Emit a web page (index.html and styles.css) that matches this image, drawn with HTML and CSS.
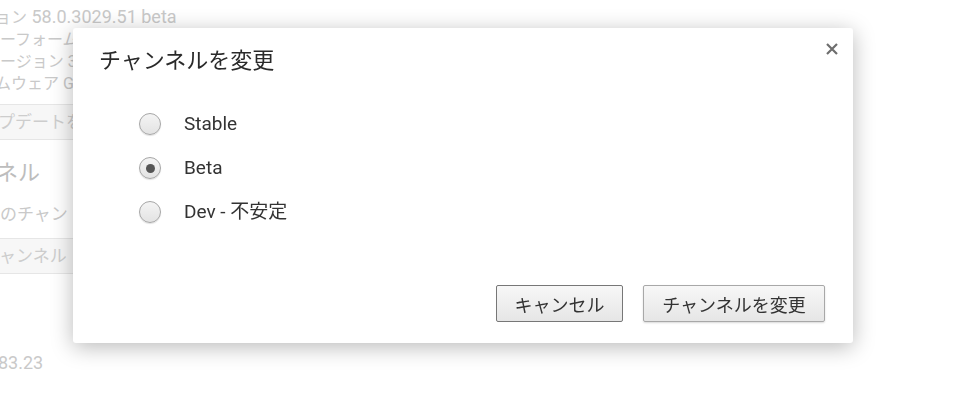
FILE: index.html
```html
<!DOCTYPE html>
<html lang="ja">
<head>
<meta charset="utf-8">
<title>チャンネルを変更</title>
<link rel="stylesheet" href="styles.css">
</head>
<body>
<div class="page" aria-hidden="true">
  <div class="line first"><span class="ja">ョン</span> 58.0.3029.51 beta</div>
  <div class="line ja-line">ーフォーム</div>
  <div class="line ja-line">ージョン 3</div>
  <div class="line ja-line cut">ムウェア G</div>
  <div class="bg-button">プデートを</div>
  <div class="heading">ネル</div>
  <div class="line desc">のチャン</div>
  <div class="bg-button">ャンネル</div>
  <div class="line bottom">83.23</div>
</div>

<div class="overlay">
  <div class="dialog" role="dialog">
    <h1 class="title">チャンネルを変更</h1>
    <button class="close" aria-label="閉じる">
      <svg width="12" height="12" viewBox="0 0 12 12"><path d="M1 1L11 11M11 1L1 11" stroke="#6e6e6e" stroke-width="2.2" stroke-linecap="butt"/></svg>
    </button>
    <div class="options">
      <label class="option"><span class="radio"></span><span class="label">Stable</span></label>
      <label class="option"><span class="radio checked"></span><span class="label">Beta</span></label>
      <label class="option"><span class="radio"></span><span class="label">Dev - 不安定</span></label>
    </div>
    <div class="actions">
      <button class="btn focused">キャンセル</button>
      <button class="btn">チャンネルを変更</button>
    </div>
  </div>
</div>
</body>
</html>
```
FILE: styles.css
```css
html, body {
  margin: 0;
  padding: 0;
  background: #fff;
  width: 963px;
  height: 405px;
  overflow: hidden;
}
body {
  font-family: Roboto, "Noto Sans CJK JP", sans-serif;
  color: #333;
}
.page {
  padding-top: 6px;
  color: #c9c9c9;
  font-size: 18px;
}
.line {
  line-height: 22px;
  white-space: nowrap;
}
.ja { font-size: 16px; }
.ja-line { font-size: 16px; }
.line.first { margin-left: -5px; }
.line.cut { margin-left: -5px; }
.bg-button {
  margin-top: 9px;
  margin-left: -20px;
  width: 200px;
  height: 34px;
  border: 1px solid #e6e6e6;
  background: #f7f7f7;
  border-radius: 2px;
  line-height: 34px;
  padding-left: 17px;
  font-size: 17px;
  white-space: nowrap;
  color: #cdcdcd;
}
.heading {
  margin-top: 18px;
  margin-left: -4px;
  font-size: 22px;
  line-height: 30px;
  color: #bdbdbd;
}
.desc {
  margin-top: 15px;
  font-size: 17px;
}
.desc + .bg-button { margin-top: 13px; padding-left: 18px; }
.bottom {
  margin-top: 78px;
  margin-left: -2px;
}

.overlay {
  position: fixed;
  inset: 0;
  padding: 28px 0 0 73px;
}
.dialog {
  position: relative;
  box-sizing: border-box;
  width: 780px;
  height: 315px;
  background: #fff;
  border-radius: 3px;
  box-shadow: 0 4px 22px rgba(0, 0, 0, 0.28);
  padding: 15px 28px 21px 26px;
  display: flex;
  flex-direction: column;
}
.title {
  margin: 0;
  font-family: "Noto Sans CJK JP", sans-serif;
  font-weight: normal;
  font-size: 22px;
  line-height: 30px;
  color: #2a2a2a;
}
.close {
  position: absolute;
  top: 14px;
  right: 14px;
  width: 14px;
  height: 14px;
  padding: 1px;
  border: 0;
  background: none;
  display: flex;
  align-items: center;
  justify-content: center;
}
.options {
  margin-top: 29px;
  margin-left: 40px;
  display: flex;
  flex-direction: column;
}
.option {
  height: 44px;
  display: flex;
  align-items: center;
  gap: 23px;
}
.radio {
  box-sizing: border-box;
  width: 22px;
  height: 22px;
  border-radius: 50%;
  border: 1.5px solid #a6a6a6;
  background: linear-gradient(#f4f4f4, #e3e3e3);
  box-shadow: 0 1px 1px rgba(0, 0, 0, 0.12);
  display: flex;
  align-items: center;
  justify-content: center;
}
.radio.checked::after {
  content: "";
  width: 9px;
  height: 9px;
  border-radius: 50%;
  background: #555;
}
.label {
  font-size: 19px;
  color: #333;
  line-height: 22px;
}
.actions {
  margin-top: auto;
  display: flex;
  justify-content: flex-end;
  gap: 20px;
}
.btn {
  box-sizing: border-box;
  height: 37px;
  padding: 0 17px;
  font-family: "Noto Sans CJK JP", sans-serif;
  font-size: 18px;
  color: #333;
  background: linear-gradient(#f7f7f7, #e6e6e6);
  border: 1px solid #a8a8a8;
  border-radius: 2px;
  box-shadow: 0 1px 2px rgba(0, 0, 0, 0.15);
}
.btn.focused {
  border-color: #777;
  box-shadow: none;
  width: 127px;
}
.btn:last-child { width: 182px; }
```
